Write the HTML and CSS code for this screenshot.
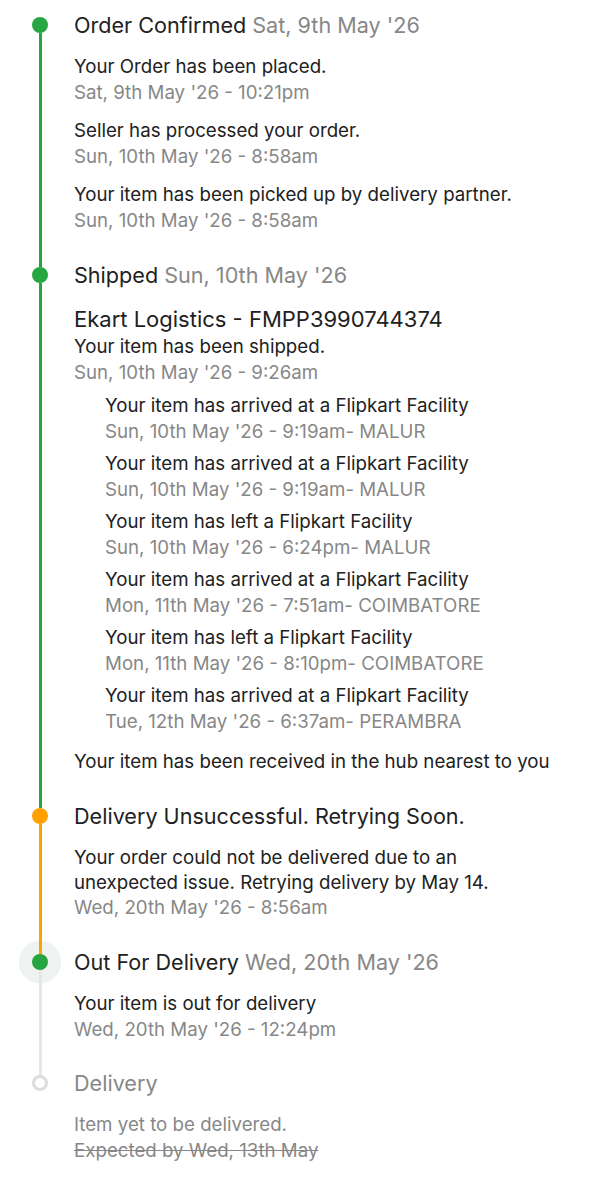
FILE: index.html
```html
<!DOCTYPE html>
<html lang="en">
<head>
<meta charset="utf-8">
<title>Order tracking</title>
<link rel="stylesheet" href="styles.css">
</head>
<body>
<div class="timeline">

  <div class="step">
    <div class="rail">
      <span class="seg seg-top none"></span>
      <span class="dot green"></span>
      <span class="seg seg-bottom green"></span>
    </div>
    <div class="content">
      <div class="title">Order Confirmed <span class="muted">Sat, 9th May '26</span></div>
      <div class="groups">
        <div class="group"><div class="line">Your Order has been placed.</div><div class="line muted">Sat, 9th May '26 - 10:21pm</div></div>
        <div class="group"><div class="line">Seller has processed your order.</div><div class="line muted">Sun, 10th May '26 - 8:58am</div></div>
        <div class="group"><div class="line">Your item has been picked up by delivery partner.</div><div class="line muted">Sun, 10th May '26 - 8:58am</div></div>
      </div>
    </div>
  </div>

  <div class="step">
    <div class="rail">
      <span class="seg seg-top green"></span>
      <span class="dot green"></span>
      <span class="seg seg-bottom green"></span>
    </div>
    <div class="content">
      <div class="title">Shipped <span class="muted">Sun, 10th May '26</span></div>
      <div class="carrier">Ekart Logistics - FMPP3990744374</div>
      <div class="line">Your item has been shipped.</div>
      <div class="line muted">Sun, 10th May '26 - 9:26am</div>
      <div class="nested">
        <div class="group"><div class="line">Your item has arrived at a Flipkart Facility</div><div class="line muted">Sun, 10th May '26 - 9:19am- MALUR</div></div>
        <div class="group"><div class="line">Your item has arrived at a Flipkart Facility</div><div class="line muted">Sun, 10th May '26 - 9:19am- MALUR</div></div>
        <div class="group"><div class="line">Your item has left a Flipkart Facility</div><div class="line muted">Sun, 10th May '26 - 6:24pm- MALUR</div></div>
        <div class="group"><div class="line">Your item has arrived at a Flipkart Facility</div><div class="line muted">Mon, 11th May '26 - 7:51am- COIMBATORE</div></div>
        <div class="group"><div class="line">Your item has left a Flipkart Facility</div><div class="line muted">Mon, 11th May '26 - 8:10pm- COIMBATORE</div></div>
        <div class="group"><div class="line">Your item has arrived at a Flipkart Facility</div><div class="line muted">Tue, 12th May '26 - 6:37am- PERAMBRA</div></div>
      </div>
      <div class="line hub">Your item has been received in the hub nearest to you</div>
    </div>
  </div>

  <div class="step">
    <div class="rail">
      <span class="seg seg-top green"></span>
      <span class="dot orange"></span>
      <span class="seg seg-bottom orange"></span>
    </div>
    <div class="content">
      <div class="title">Delivery Unsuccessful. Retrying Soon.</div>
      <div class="para">Your order could not be delivered due to an unexpected issue. Retrying delivery by May 14.</div>
      <div class="line muted">Wed, 20th May '26 - 8:56am</div>
    </div>
  </div>

  <div class="step step-short">
    <div class="rail">
      <span class="seg seg-top orange"></span>
      <span class="dot green current"></span>
      <span class="seg seg-bottom grey"></span>
    </div>
    <div class="content">
      <div class="title">Out For Delivery <span class="muted">Wed, 20th May '26</span></div>
      <div class="group first"><div class="line">Your item is out for delivery</div><div class="line muted">Wed, 20th May '26 - 12:24pm</div></div>
    </div>
  </div>

  <div class="step">
    <div class="rail">
      <span class="seg seg-top grey"></span>
      <span class="dot hollow"></span>
    </div>
    <div class="content">
      <div class="title muted">Delivery</div>
      <div class="group first"><div class="line muted">Item yet to be delivered.</div><div class="line muted strike">Expected by Wed, 13th May</div></div>
    </div>
  </div>

</div>
</body>
</html>
```

FILE: styles.css
```css
* { box-sizing: border-box; }

html, body {
  margin: 0;
  padding: 0;
  background: #ffffff;
}

body {
  font-family: Inter, "Noto Sans", sans-serif;
  color: #212121;
  width: 598px;
}

.timeline {
  display: flex;
  flex-direction: column;
  padding-top: 10px;
}

.step {
  display: flex;
  align-items: stretch;
}

.rail {
  width: 74px;
  flex-shrink: 0;
  display: flex;
  flex-direction: column;
}

.seg {
  display: block;
  width: 3px;
  margin-left: 39px;
  position: relative;
  z-index: 1;
}

.seg-top { height: 7px; }
.seg-bottom { flex: 1; }

.seg.none { background: transparent; }
.seg.green { background: #26a541; }
.seg.orange { background: #ff9f00; }
.seg.grey { background: #e6e6e6; }

.dot {
  display: block;
  width: 16px;
  height: 16px;
  border-radius: 50%;
  margin-left: 32px;
  flex-shrink: 0;
}

.dot.green { background: #26a541; }
.dot.orange { background: #ff9f00; }

.dot.current {
  box-shadow: 0 0 0 13px #eef3ef;
}

.dot.hollow {
  background: #ffffff;
  border: 3px solid #dcdcdc;
}

.content {
  flex: 1;
  padding-bottom: 26px;
  padding-right: 40px;
  font-size: 18.7px;
  line-height: 26px;
}

.step-short .content { padding-bottom: 25px; }

.title {
  font-size: 21.6px;
  line-height: 30px;
  margin-bottom: 14px;
}

.muted { color: #878787; }

.groups {
  display: flex;
  flex-direction: column;
  gap: 12px;
}

.carrier {
  font-size: 22px;
  line-height: 30px;
}

.nested {
  display: flex;
  flex-direction: column;
  gap: 6px;
  margin-top: 7px;
  padding-left: 31px;
}

.hub { margin-top: 14px; }

.para {
  line-height: 25px;
}

.strike { text-decoration: line-through; }

.step:last-child .content { padding-bottom: 30px; }
```
